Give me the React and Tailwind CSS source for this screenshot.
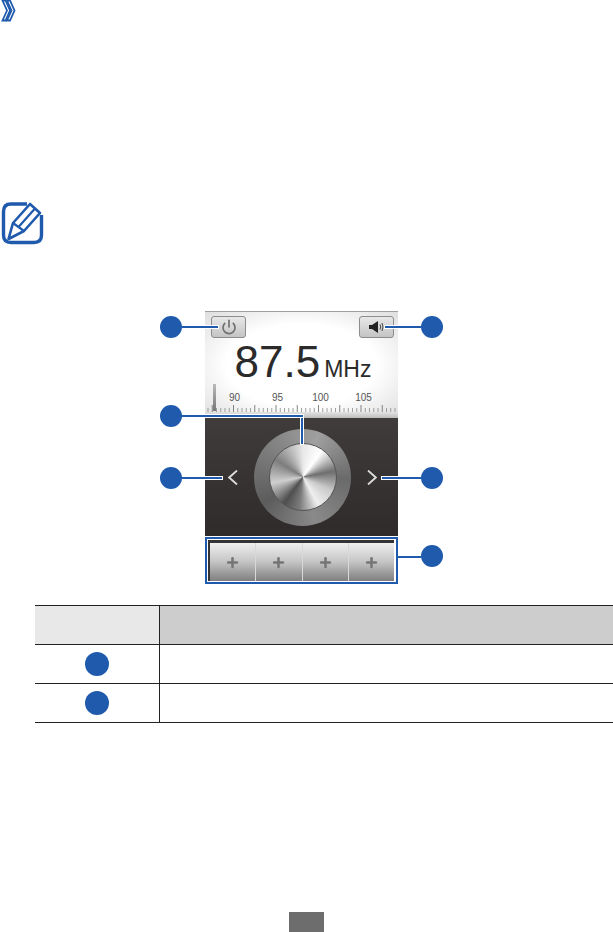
import { Power, Plus } from 'lucide-react';

const BLUE = '#1f5aad';

function Dot({ className }) {
  return <div className={`absolute w-[22px] h-[22px] rounded-full bg-[#1f5aad] ${className}`} />;
}

// leader line: blue core with a thin white halo, sits over the screenshot
function Lead({ className }) {
  return <div className={`absolute bg-[#1f5aad] shadow-[0_0_0_1px_#ffffff] ${className}`} />;
}

function Scale() {
  const ticks = [];
  for (let i = 0; i < 46; i++) {
    const x = 3 + i * 4.25;
    const major = (i - 6) % 5 === 0;
    ticks.push(<line key={i} x1={x} x2={x} y1={major ? 0 : 3} y2={7} stroke={major ? '#666' : '#888'} strokeWidth="0.8" />);
  }
  return (
    <svg width="193" height="7" className="block">
      {ticks}
    </svg>
  );
}

function PresetButton() {
  return (
    <div className="flex-1 flex items-center justify-center border-r border-[#d8d8d8] last:border-r-0 bg-gradient-to-b from-[#efefef] via-[#c4c4c4] to-[#7f7f7f]">
      <Plus size={15} strokeWidth={4} className="text-[#757575]" />
    </div>
  );
}

export default function App() {
  return (
    <div className="relative w-[613px] h-[932px] bg-white flex flex-col overflow-hidden">
      {/* section arrow */}
      <svg width="16" height="22" viewBox="0 0 16 22" className="ml-[1px] shrink-0" fill="none" stroke={BLUE} strokeWidth="1.800" strokeLinejoin="miter">
        <path d="M1.500 0.500 L4.500 0.500 L9 10.500 L4.500 20.500 L1.500 20.500 L6 10.500 Z" />
        <path d="M6 0.500 L9 0.500 L13.500 10.500 L9 20.500 L6 20.500 L10.500 10.500 Z" />
      </svg>

      {/* note icon */}
      <svg width="44" height="45" viewBox="0 0 44 45" className="ml-[1px] mt-[179px] shrink-0" fill="none" stroke={BLUE}>
        <path d="M26 3 H10 Q2.500 3 2.500 10.500 V34 Q2.500 41.500 10 41.500 H33 Q40.500 41.500 40.500 34 V14" strokeWidth="3.400" />
        <path d="M7.500 38 L12 22 L29 3 L39 12 L23 30 Z" strokeWidth="2.600" fill="#ffffff" strokeLinejoin="round" />
        <path d="M12 22 L23 30 M17.500 26 L34 7.500" strokeWidth="2.200" />
      </svg>

      {/* radio screen with callouts */}
      <div className="relative mt-[65px] h-[274px] shrink-0 font-['Liberation_Sans',sans-serif]">
        <div className="ml-[205px] w-[193px] flex flex-col">
          <div className="h-[107px] flex flex-col border-t border-[#a0a0a0] bg-[radial-gradient(ellipse_at_center,#ffffff_55%,#dedede_100%)]">
            <div className="flex justify-between pl-[6px] pr-[4px] pt-[4px]">
              <div className="w-[35px] h-[22px] flex items-center justify-center rounded-[3px] border border-[#8c8c8c] bg-gradient-to-b from-[#e8e8e8] to-[#c4c4c4]">
                <Power size={16} strokeWidth={2.5} className="text-[#707070]" />
              </div>
              <div className="w-[35px] h-[22px] flex items-center justify-center rounded-[3px] border border-[#8c8c8c] bg-gradient-to-b from-[#e8e8e8] to-[#c4c4c4]">
                <svg width="16" height="12" viewBox="0 0 16 12">
                  <path d="M0 4 H3 L9 0 V12 L3 8 H0 Z" fill="#222" />
                  <path d="M11 3.500 Q12.500 6 11 8.500 M13 2 Q15 6 13 10" fill="none" stroke="#444" strokeWidth="1" />
                </svg>
              </div>
            </div>
            <div className="flex items-baseline justify-center text-[#2b2b2b] leading-none mt-[2px] pl-[3px]">
              <span className="text-[44px] leading-[44px]">87.5</span>
              <span className="text-[23px] leading-none ml-[4px]">MHz</span>
            </div>
            <div className="relative flex pl-[8px] mt-[8px] text-[10px] leading-[12px] text-[#555]">
              <div className="absolute left-[8px] top-[-8px] w-[3px] h-[27px] bg-gradient-to-b from-[#bbbbbb] to-[#777777]" />
              <span className="w-[43px] text-center">90</span>
              <span className="w-[43px] text-center">95</span>
              <span className="w-[43px] text-center">100</span>
              <span className="w-[43px] text-center">105</span>
            </div>
            <div className="mt-[1px]">
              <Scale />
            </div>
            <div className="flex-1 bg-gradient-to-b from-[#e4e4e4] to-[#bdbdbd]" />
          </div>

          <div className="h-[118px] flex items-center justify-between pl-[23px] pr-[21px] bg-gradient-to-b from-[#403c3c] to-[#2f2b2b]">
            <svg width="10" height="15" viewBox="0 0 10 15" fill="none" stroke="#dddddd" strokeWidth="1.800">
              <path d="M9 0.500 L1.200 7.500 L9 14.500" />
            </svg>
            <div className="w-[97px] h-[97px] rounded-full flex items-center justify-center bg-[conic-gradient(from_20deg,#a0a0a0,#6a6a6a,#8a8a8a,#5c5c5c,#7d7d7d,#a0a0a0)]">
              <div className="w-[68px] h-[68px] rounded-full border border-[#555] bg-[conic-gradient(from_0deg,#e8e8e8,#ffffff_10%,#6e6e6e_22%,#c9c9c9_32%,#efefef_42%,#7a7a7a_52%,#4f4f4f_60%,#cfcfcf_72%,#7d7d7d_84%,#e8e8e8)]" />
            </div>
            <svg width="10" height="15" viewBox="0 0 10 15" fill="none" stroke="#dddddd" strokeWidth="1.800">
              <path d="M1 0.500 L8.800 7.500 L1 14.500" />
            </svg>
          </div>

          <div className="mt-[1px] h-[47px] flex border-2 border-[#1f5aad] bg-white p-[1px]">
            <div className="flex-1 flex mr-[1px] pl-[2px] pt-[3px] bg-[#333]">
              <PresetButton />
              <PresetButton />
              <PresetButton />
              <PresetButton />
            </div>
          </div>
        </div>

        {/* callouts */}
        <Lead className="left-[182px] top-[15px] w-[36px] h-[2px]" />
        <Lead className="left-[385px] top-[15px] w-[36px] h-[2px]" />
        <Lead className="left-[301px] top-[104px] w-[2px] h-[29px]" />
        <Lead className="left-[182px] top-[104px] w-[121px] h-[2px]" />
        <Lead className="left-[182px] top-[166px] w-[40px] h-[2px]" />
        <Lead className="left-[382px] top-[166px] w-[39px] h-[2px]" />
        <div className="absolute left-[398px] top-[245px] w-[23px] h-[2px] bg-[#1f5aad]" />
        <Dot className="left-[160px] top-[5px]" />
        <Dot className="left-[421px] top-[5px]" />
        <Dot className="left-[160px] top-[94px]" />
        <Dot className="left-[160px] top-[156px]" />
        <Dot className="left-[421px] top-[156px]" />
        <Dot className="left-[421px] top-[234px]" />
      </div>

      {/* table */}
      <div className="ml-[35px] mt-[20px] border-t border-[#222] shrink-0">
        <div className="grid grid-cols-[125px_1fr] h-[39px] border-b border-[#222]">
          <div className="bg-[#e8e8e8] border-r border-[#222]" />
          <div className="bg-[#cdcdcd]" />
        </div>
        <div className="grid grid-cols-[125px_1fr] h-[39px] border-b border-[#222]">
          <div className="flex items-center justify-center border-r border-[#222]">
            <div className="w-[24px] h-[24px] rounded-full bg-[#1f5aad]" />
          </div>
          <div />
        </div>
        <div className="grid grid-cols-[125px_1fr] h-[39px] border-b border-[#222]">
          <div className="flex items-center justify-center border-r border-[#222]">
            <div className="w-[24px] h-[24px] rounded-full bg-[#1f5aad]" />
          </div>
          <div />
        </div>
      </div>

      {/* page number tab */}
      <div className="mt-auto ml-[289px] w-[35px] h-[20px] bg-[#6d6d6d]" />
    </div>
  );
}
